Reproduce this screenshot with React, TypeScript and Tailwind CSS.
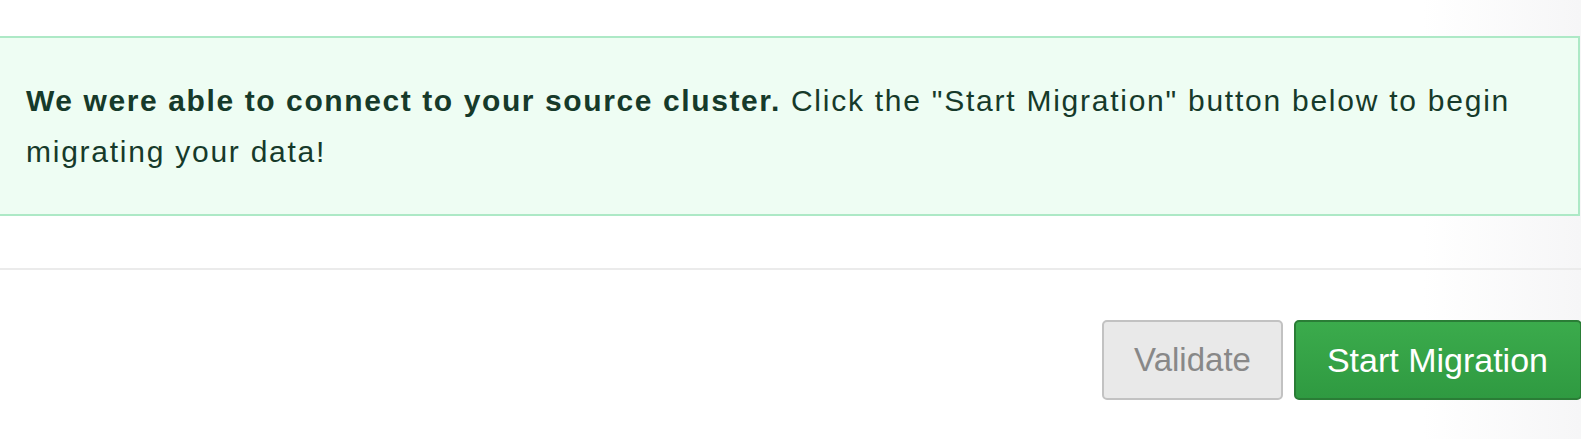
export default function App() {
  return (
    <div className="w-[1581px] h-[439px] overflow-hidden bg-gradient-to-r from-white via-white via-90% to-[#f6f6f7] font-['Liberation_Sans',Arial,sans-serif]">
      <div className="pt-[36px]">
        <div className="-ml-[2px] mr-[1px] border-2 border-[#ade9c6] bg-[#eefdf3] pl-[26px] pr-[40px] pt-[37px] pb-[37px] text-[30px] leading-[51px] tracking-[1.75px] text-[#163a2a]">
          <strong className="font-bold tracking-[1.6px]">We were able to connect to your source cluster.</strong> Click the "Start Migration" button below to begin migrating your data!
        </div>
      </div>
      <div className="mt-[52px] h-[2px] bg-[#ebebeb]" />
      <div className="flex justify-end gap-[11px] pt-[50px]">
        <button className="h-[80px] px-[30px] rounded-[5px] border-2 border-[#c2c2c2] bg-[#e9e9e9] text-[33px] text-[#888888]">
          Validate
        </button>
        <button className="h-[80px] pl-[31px] pr-[32px] -mr-[1px] rounded-[5px] border-2 border-[#2a7d36] bg-gradient-to-b from-[#3bab4c] to-[#2f9a41] text-[34px] text-white">
          Start Migration
        </button>
      </div>
    </div>
  );
}
